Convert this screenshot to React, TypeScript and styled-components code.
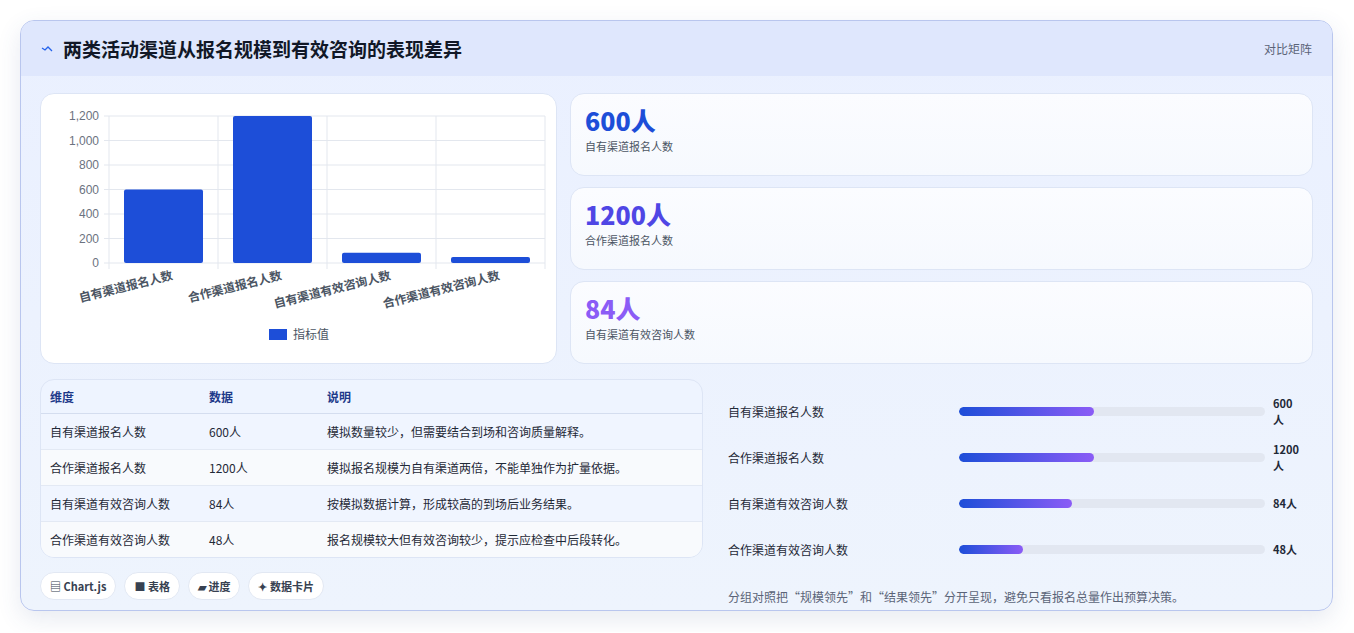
import React from "react";
import styled, { createGlobalStyle } from "styled-components";

const Global = createGlobalStyle`
  body { margin: 0; background: #fff; font-family: "Noto Sans CJK SC", "Noto Sans", sans-serif; }
`;

const Page = styled.div`
  padding: 20px 20px 21px 20px;
`;

const Card = styled.div`
  width: 1313px;
  height: 591px;
  box-sizing: border-box;
  border: 1px solid #b9c6ee;
  border-radius: 14px;
  background: linear-gradient(180deg, #eaf0ff, #eef4fd);
  box-shadow: 0 8px 24px rgba(60, 80, 140, 0.12);
  overflow: hidden;
  display: flex;
  flex-direction: column;
`;

const Header = styled.div`
  height: 55px;
  display: flex;
  align-items: center;
  justify-content: space-between;
  padding: 0 20px 0 20px;
  background: #dfe7fd;
`;

const Title = styled.h1`
  margin: 0;
  font-size: 19px;
  font-weight: 700;
  color: #111827;
  display: flex;
  align-items: center;
  gap: 10px;
`;

const HeaderTag = styled.span`
  font-size: 12px;
  color: #5b6478;
`;

const Body = styled.div`
  padding: 17px 19px 0 19px;
  display: flex;
  flex-direction: column;
  gap: 15px;
`;

const Row = styled.div`
  display: grid;
  grid-template-columns: 517px 1fr;
  gap: 13px;
`;

const Panel = styled.div`
  background: #fff;
  border: 1px solid #dde5f5;
  border-radius: 14px;
`;

const Stats = styled.div`
  display: flex;
  flex-direction: column;
  gap: 11px;
`;

const Stat = styled.div`
  height: 83px;
  box-sizing: border-box;
  border: 1px solid #dde5f5;
  border-radius: 14px;
  background: linear-gradient(180deg, #fbfcff, #f6f9fe);
  padding: 10px 14px;
`;

const StatValue = styled.div<{ $c: string }>`
  font-size: 25px;
  font-weight: 800;
  color: ${(p) => p.$c};
  line-height: 32px;
`;

const StatLabel = styled.div`
  font-size: 11px;
  color: #4b5563;
  margin-top: 2px;
`;

const Table = styled.table`
  width: 100%;
  border-collapse: collapse;
  font-size: 12px;
  color: #1f2937;
  td, th { text-align: left; padding: 0 9px; height: 35px; }
  th { color: #1e3a8a; font-weight: 600; height: 33px; border-bottom: 1px solid #d4ddef; }
  tr:nth-child(odd) td { background: #f0f5ff; }
  tr:nth-child(even) td { background: #f8fafd; }
  tr + tr td { border-top: 1px solid #e3e9f4; }
`;

const TableWrap = styled(Panel)`
  overflow: hidden;
  background: #eef4ff;
`;

const Left = styled.div`
  display: flex;
  flex-direction: column;
  gap: 14px;
`;

const Chips = styled.div`
  display: flex;
  gap: 8px;
`;

const Chip = styled.span`
  font-size: 11px;
  font-weight: 600;
  color: #374151;
  background: #fff;
  border: 1px solid #e2e8f3;
  border-radius: 14px;
  padding: 5px 9px;
`;

const Bars = styled.div`
  display: flex;
  flex-direction: column;
  padding: 9px 12px 0 12px;
`;

const BarRow = styled.div`
  display: grid;
  grid-template-columns: 223px 306px 1fr;
  gap: 8px;
  align-items: center;
  height: 46px;
  font-size: 12px;
  color: #1f2937;
`;

const Track = styled.div`
  height: 9px;
  border-radius: 5px;
  background: #e2e7f1;
  overflow: hidden;
`;

const Fill = styled.div`
  height: 100%;
  border-radius: 5px;
  background: linear-gradient(90deg, #1d4ed8, #8b5cf6);
`;

const Value = styled.span`
  font-weight: 700;
  font-size: 11px;
`;

const Note = styled.div`
  font-size: 12px;
  color: #5b6478;
  margin-top: 16px;
`;

const labels = ["自有渠道报名人数", "合作渠道报名人数", "自有渠道有效咨询人数", "合作渠道有效咨询人数"];
const values = [600, 1200, 84, 48];

const Chart = () => {
  const x0 = 68, x1 = 504, y0 = 22, y1 = 169;
  const h = y1 - y0;
  const w = (x1 - x0) / 4;
  const font = '"Liberation Sans", "Noto Sans CJK SC", sans-serif';
  return (
    <svg width="515" height="268" style={{ display: "block" }}>
      {[0, 200, 400, 600, 800, 1000, 1200].map((v) => {
        const y = y1 - (v / 1200) * h;
        return (
          <g key={v}>
            <line x1={x0 - 5} x2={x1} y1={y} y2={y} stroke="#e3e7ee" />
            <text x={x0 - 10} y={y + 4} fontSize="12" fill="#6b7280" textAnchor="end" fontFamily={font}>
              {v.toLocaleString("en-US")}
            </text>
          </g>
        );
      })}
      {[0, 1, 2, 3, 4].map((i) => (
        <line key={i} x1={x0 + i * w} x2={x0 + i * w} y1={y0} y2={y1 + 6} stroke="#e3e7ee" />
      ))}
      {values.map((v, i) => {
        const bh = Math.max((v / 1200) * h, 5);
        return (
          <rect key={i} x={x0 + i * w + 15} y={y1 - bh} width={w - 30} height={bh} rx="2" fill="#1d4ed8" />
        );
      })}
      {labels.map((l, i) => (
        <text
          key={l}
          fontSize="12"
          fontWeight="600"
          fill="#4b5563"
          textAnchor="end"
          fontFamily={font}
          transform={`translate(${x0 + i * w + w / 2 + 10},${y1 + 16}) rotate(-14)`}
        >
          {l}
        </text>
      ))}
      <rect x="228" y="235" width="18" height="11" fill="#1d4ed8" />
      <text x="252" y="245" fontSize="12" fill="#4b5563" fontFamily={font}>指标值</text>
    </svg>
  );
};

const rows = [
  ["自有渠道报名人数", "600人", "模拟数量较少，但需要结合到场和咨询质量解释。"],
  ["合作渠道报名人数", "1200人", "模拟报名规模为自有渠道两倍，不能单独作为扩量依据。"],
  ["自有渠道有效咨询人数", "84人", "按模拟数据计算，形成较高的到场后业务结果。"],
  ["合作渠道有效咨询人数", "48人", "报名规模较大但有效咨询较少，提示应检查中后段转化。"],
];
const pct = [44, 44, 37, 21];

export default function App() {
  return (
    <Page>
      <Global />
      <Card>
        <Header>
          <Title>
            <svg width="12" height="12" viewBox="0 0 12 12">
              <path d="M1 5 L4 7 L7 4 L11 8" stroke="#2563eb" strokeWidth="1.3" fill="none" />
            </svg>
            两类活动渠道从报名规模到有效咨询的表现差异
          </Title>
          <HeaderTag>对比矩阵</HeaderTag>
        </Header>
        <Body>
          <Row>
            <Panel><Chart /></Panel>
            <Stats>
              <Stat><StatValue $c="#1d4ed8">600人</StatValue><StatLabel>自有渠道报名人数</StatLabel></Stat>
              <Stat><StatValue $c="#4f46e5">1200人</StatValue><StatLabel>合作渠道报名人数</StatLabel></Stat>
              <Stat><StatValue $c="#8b5cf6">84人</StatValue><StatLabel>自有渠道有效咨询人数</StatLabel></Stat>
            </Stats>
          </Row>
          <Row style={{ gridTemplateColumns: "663px 1fr" }}>
            <Left>
              <TableWrap>
                <Table>
                  <thead>
                    <tr><th style={{ width: 141 }}>维度</th><th style={{ width: 100 }}>数据</th><th>说明</th></tr>
                  </thead>
                  <tbody>
                    {rows.map((r) => (
                      <tr key={r[0]}>{r.map((c) => <td key={c}>{c}</td>)}</tr>
                    ))}
                  </tbody>
                </Table>
              </TableWrap>
              <Chips>
                <Chip>▤ Chart.js</Chip>
                <Chip>■ 表格</Chip>
                <Chip>▰ 进度</Chip>
                <Chip>✦ 数据卡片</Chip>
              </Chips>
            </Left>
            <Bars>
              {rows.map((r, i) => (
                <BarRow key={r[0]}>
                  <span>{r[0]}</span>
                  <Track><Fill style={{ width: `${pct[i]}%` }} /></Track>
                  <Value>{r[1]}</Value>
                </BarRow>
              ))}
              <Note>分组对照把“规模领先”和“结果领先”分开呈现，避免只看报名总量作出预算决策。</Note>
            </Bars>
          </Row>
        </Body>
      </Card>
    </Page>
  );
}
